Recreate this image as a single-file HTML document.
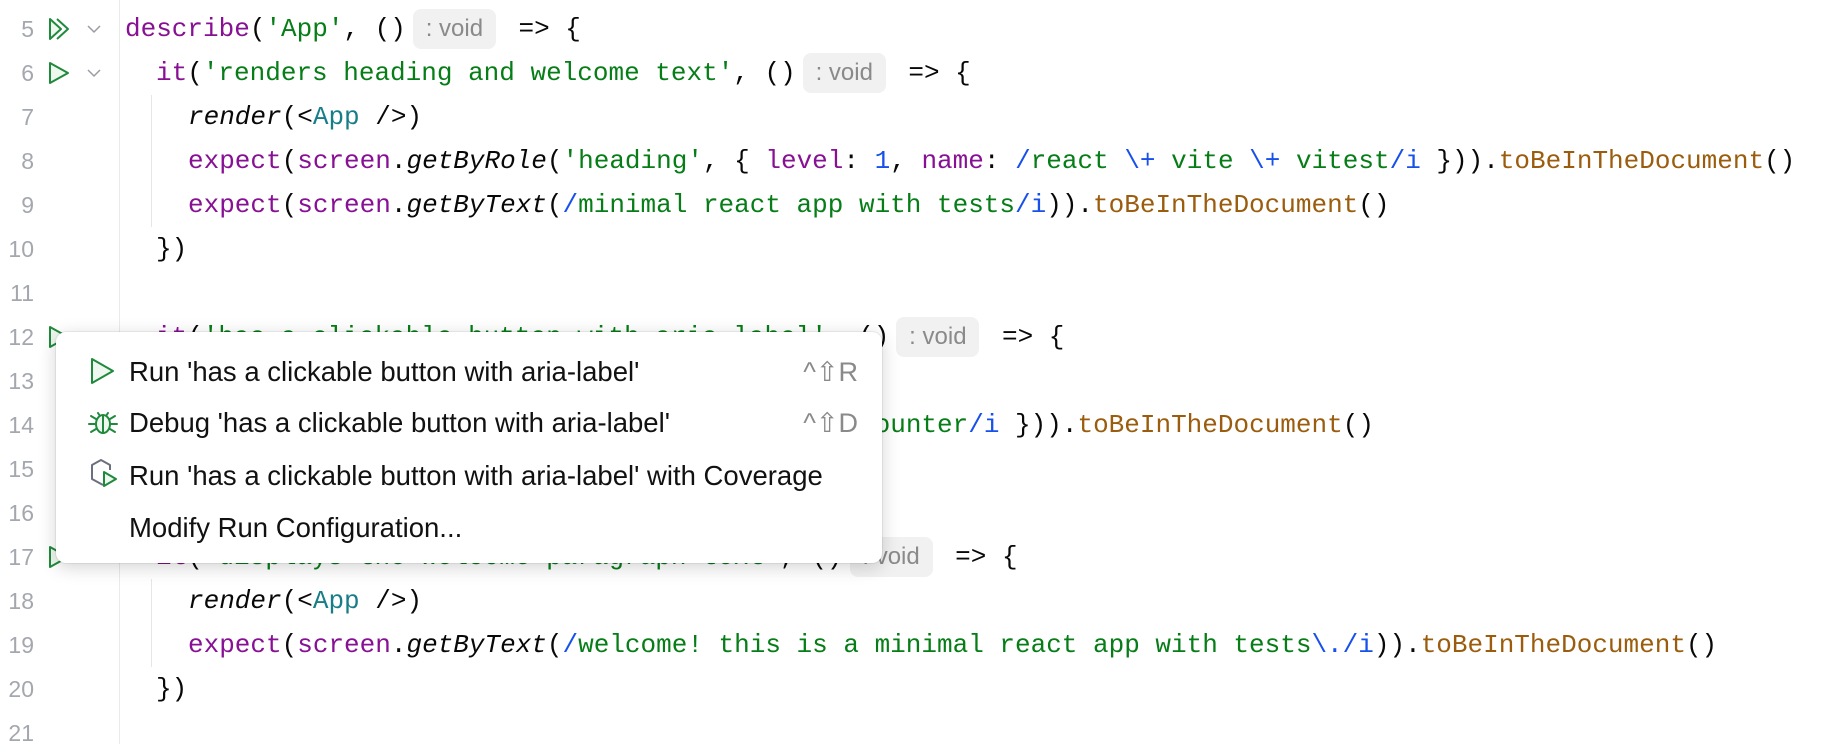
<!DOCTYPE html>
<html><head><meta charset="utf-8"><style>
*{margin:0;padding:0;box-sizing:border-box}
body{width:1822px;height:744px;background:#fff;position:relative;overflow:hidden;font-family:"Liberation Mono",monospace}
.ln{position:absolute;left:0;width:34px;text-align:right;font-family:"Liberation Sans",sans-serif;font-size:23px;color:#a4a7ae;height:44px;line-height:44px}
.c{position:absolute;white-space:pre;font-size:26px;height:44px;line-height:44px;color:#080808}
.p{color:#871094}.s{color:#067d17}.r{color:#1750eb}.t{color:#177e89}.m{color:#9b5c0d}.i{font-style:italic}
.h{display:inline-block;font-family:"Liberation Sans",sans-serif;font-size:24px;color:#8a8a8a;background:#f1f1f1;border-radius:8px;height:40px;line-height:40px;width:83px;text-align:center;margin:0 7px 0 7px;vertical-align:top;margin-top:2px}
.gl{position:absolute;left:119px;top:0;width:1px;height:744px;background:#ebebeb}
.ig{position:absolute;left:151px;width:1px;background:#e6e6e6}
.pop{position:absolute;left:56px;top:332px;width:826px;height:231px;background:#fff;border-radius:10px;box-shadow:0 4px 18px rgba(0,0,0,.18),0 0 0 1px rgba(0,0,0,.06)}
.it{position:absolute;left:73px;font-family:"Liberation Sans",sans-serif;font-size:27.5px;color:#111;white-space:pre;height:40px;line-height:40px}
.sc{position:absolute;right:24px;font-family:"Liberation Sans",sans-serif;font-size:27px;color:#8a8a8a;height:40px;line-height:40px}
svg{position:absolute}
</style></head><body>
<div class="gl"></div>
<div class="ig" style="top:95px;height:132px"></div>
<div class="ig" style="top:579px;height:88px"></div>

<div class="ln" style="top:7px">5</div>
<div class="ln" style="top:51px">6</div>
<div class="ln" style="top:95px">7</div>
<div class="ln" style="top:139px">8</div>
<div class="ln" style="top:183px">9</div>
<div class="ln" style="top:227px">10</div>
<div class="ln" style="top:271px">11</div>
<div class="ln" style="top:315px">12</div>
<div class="ln" style="top:359px">13</div>
<div class="ln" style="top:403px">14</div>
<div class="ln" style="top:447px">15</div>
<div class="ln" style="top:491px">16</div>
<div class="ln" style="top:535px">17</div>
<div class="ln" style="top:579px">18</div>
<div class="ln" style="top:623px">19</div>
<div class="ln" style="top:667px">20</div>
<div class="ln" style="top:711px">21</div>

<svg style="left:48px;top:17px" width="26" height="24" viewBox="0 0 26 24"><path d="M2 2 L13 12 L2 22 Z" fill="#eef8ef" stroke="#208a3c" stroke-width="2" stroke-linejoin="round"/><path d="M9 2 L20 12 L9 22" fill="none" stroke="#208a3c" stroke-width="2" stroke-linejoin="round"/></svg>
<svg style="left:87px;top:24px" width="14" height="10"><path d="M1 2 L7 8 L13 2" fill="none" stroke="#9a9ca3" stroke-width="1.5"/></svg>
<svg style="left:48px;top:61px" width="24" height="24" viewBox="0 0 24 24"><path d="M2 2 L20 12 L2 22 Z" fill="#eef8ef" stroke="#208a3c" stroke-width="2" stroke-linejoin="round"/></svg>
<svg style="left:87px;top:68px" width="14" height="10"><path d="M1 2 L7 8 L13 2" fill="none" stroke="#9a9ca3" stroke-width="1.5"/></svg>
<svg style="left:48px;top:325px" width="24" height="24" viewBox="0 0 24 24"><path d="M2 2 L20 12 L2 22 Z" fill="#eef8ef" stroke="#208a3c" stroke-width="2" stroke-linejoin="round"/></svg>
<svg style="left:48px;top:545px" width="24" height="24" viewBox="0 0 24 24"><path d="M2 2 L20 12 L2 22 Z" fill="#eef8ef" stroke="#208a3c" stroke-width="2" stroke-linejoin="round"/></svg>

<div class="c" style="left:125px;top:7px"><span class="p">describe</span>(<span class="s">'App'</span>, ()<span class="h">: void</span> =&gt; {</div>
<div class="c" style="left:156px;top:51px"><span class="p">it</span>(<span class="s">'renders heading and welcome text'</span>, ()<span class="h">: void</span> =&gt; {</div>
<div class="c" style="left:188px;top:95px"><span class="i">render</span>(&lt;<span class="t">App</span> /&gt;)</div>
<div class="c" style="left:188px;top:139px"><span class="p">expect</span>(<span class="p">screen</span>.<span class="i">getByRole</span>(<span class="s">'heading'</span>, { <span class="p">level</span>: <span class="r">1</span>, <span class="p">name</span>: <span class="r">/</span><span class="s">react </span><span class="r">\+</span><span class="s"> vite </span><span class="r">\+</span><span class="s"> vitest</span><span class="r">/i</span> })).<span class="m">toBeInTheDocument</span>()</div>
<div class="c" style="left:188px;top:183px"><span class="p">expect</span>(<span class="p">screen</span>.<span class="i">getByText</span>(<span class="r">/</span><span class="s">minimal react app with tests</span><span class="r">/i</span>)).<span class="m">toBeInTheDocument</span>()</div>
<div class="c" style="left:156px;top:227px">})</div>
<div class="c" style="left:156px;top:315px"><span class="p">it</span>(<span class="s">'has a clickable button with aria-label'</span>, ()<span class="h">: void</span> =&gt; {</div>
<div class="c" style="left:188px;top:359px"><span class="i">render</span>(&lt;<span class="t">App</span> /&gt;)</div>
<div class="c" style="left:188px;top:403px"><span class="p">expect</span>(<span class="p">screen</span>.<span class="i">getByRole</span>(<span class="s">'button'</span>, { <span class="p">name</span>: <span class="r">/</span><span class="s">counter</span><span class="r">/i</span> })).<span class="m">toBeInTheDocument</span>()</div>
<div class="c" style="left:156px;top:447px">})</div>
<div class="c" style="left:156px;top:535px"><span class="p">it</span>(<span class="s">'displays the welcome paragraph text'</span>, ()<span class="h">: void</span> =&gt; {</div>
<div class="c" style="left:188px;top:579px"><span class="i">render</span>(&lt;<span class="t">App</span> /&gt;)</div>
<div class="c" style="left:188px;top:623px"><span class="p">expect</span>(<span class="p">screen</span>.<span class="i">getByText</span>(<span class="r">/</span><span class="s">welcome! this is a minimal react app with tests</span><span class="r">\./i</span>)).<span class="m">toBeInTheDocument</span>()</div>
<div class="c" style="left:156px;top:667px">})</div>

<div class="pop">
<svg style="left:34px;top:25px" width="26" height="28" viewBox="0 0 26 28"><path d="M2 2 L23 14 L2 26 Z" fill="#eef8ef" stroke="#208a3c" stroke-width="2" stroke-linejoin="round"/></svg>
<div class="it" style="top:20px">Run 'has a clickable button with aria-label'</div>
<div class="sc" style="top:20px">^⇧R</div>
<svg style="left:31px;top:75px" width="32" height="30" viewBox="0 0 32 30"><g fill="none" stroke="#208a3c" stroke-width="2" stroke-linecap="round"><path d="M11 6 L13 9 M21 6 L19 9"/><ellipse cx="16" cy="17" rx="7" ry="9" fill="#eef8ef"/><path d="M16 9 V26 M2 17 H9 M23 17 H30 M4 9 L9 12 M28 9 L23 12 M4 25 L9 22 M28 25 L23 22"/></g></svg>
<div class="it" style="top:71px">Debug 'has a clickable button with aria-label'</div>
<div class="sc" style="top:71px">^⇧D</div>
<svg style="left:33px;top:126px" width="30" height="30" viewBox="0 0 30 30"><path d="M14 27 L3 21 V7 L12 2 L21 7 V12" fill="none" stroke="#6c707e" stroke-width="2" stroke-linejoin="round"/><path d="M15 14 L27 21 L15 28 Z" fill="#eef8ef" stroke="#208a3c" stroke-width="2" stroke-linejoin="round"/></svg>
<div class="it" style="top:124px">Run 'has a clickable button with aria-label' with Coverage</div>
<div class="it" style="top:176px">Modify Run Configuration...</div>
</div>
</body></html>
